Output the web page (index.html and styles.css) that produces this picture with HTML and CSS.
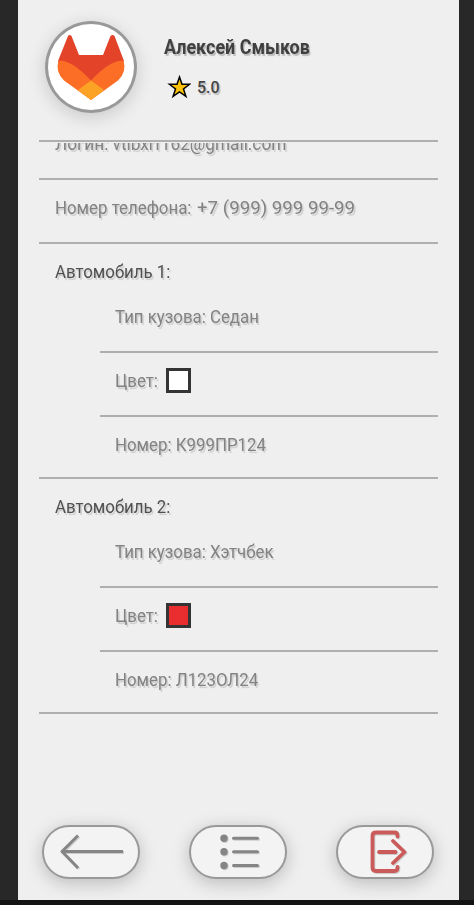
FILE: index.html
```html
<!DOCTYPE html>
<html lang="ru">
<head>
<meta charset="utf-8">
<title>Профиль</title>
<link rel="stylesheet" href="styles.css">
</head>
<body>
<main class="screen">
  <header class="profile">
    <div class="avatar">
      <svg width="92" height="92" viewBox="0 0 92 92">
        <path fill="#e24329" d="M13 40 23 15Q24.500 12.800 26.500 15L34 34H58L65.500 15Q67.500 12.800 69.500 15L79 40 71 56 46 60 20 55Z"/>
        <path fill="#fc6d26" d="M13.500 39.500Q27 39 46 59.500Q65 39 78.500 39.500Q82 51 73 59.500L46 79 19 59.500Q10 51 13.500 39.500Z"/>
        <path fill="#fca326" d="M46 59.500 59 69 47.500 78Q46 79 44.500 78L33 69Z"/>
      </svg>
    </div>
    <div class="identity">
      <h1 class="name">Алексей Смыков</h1>
      <div class="rating">
        <svg width="24" height="24" viewBox="0 0 24 24"><path d="M12.500 2 15 9.300H22.500L16.500 13.900 18.900 21.300 12.500 16.900 6.100 21.300 8.500 13.900 2.500 9.300H10Z" fill="#fcc208" stroke="#000" stroke-width="1.500"/></svg>
        <span class="score">5.0</span>
      </div>
    </div>
  </header>
  <section class="details">
    <div class="row login"><span class="text email">Логин: vtlbxrf162@gmail.com</span></div>
    <div class="row"><span class="text phone-label">Номер телефона:</span><span class="text phone">+7 (999) 999 99-99</span></div>
    <div class="car">
      <h2 class="car-title">Автомобиль 1:</h2>
      <div class="car-info">
        <div class="row"><span class="text">Тип кузова: Седан</span></div>
        <div class="row"><span class="text color">Цвет:</span><i class="swatch white"></i></div>
        <div class="row plate"><span class="text">Номер: К999ПР124</span></div>
      </div>
    </div>
    <div class="car">
      <h2 class="car-title">Автомобиль 2:</h2>
      <div class="car-info">
        <div class="row"><span class="text">Тип кузова: Хэтчбек</span></div>
        <div class="row"><span class="text color">Цвет:</span><i class="swatch red"></i></div>
        <div class="row plate"><span class="text">Номер: Л123ОЛ24</span></div>
      </div>
    </div>
  </section>
  <nav class="actions">
    <button class="action" aria-label="Назад"><svg class="icon" width="94" height="50" viewBox="0 0 94 50"><path d="M79 24.500H18.500M34 8.500 18 24.500 34 41"/></svg></button>
    <button class="action" aria-label="Список"><svg class="icon" width="94" height="50" viewBox="0 0 94 50"><path d="M42.500 11.300H66.500M42.500 24.800H66.500M42.500 38.500H66.500" stroke-linecap="round"/><g class="dots"><circle cx="33" cy="11.300" r="3.700"/><circle cx="33" cy="24.800" r="3.700"/><circle cx="33" cy="38.500" r="3.700"/></g></svg></button>
    <button class="action" aria-label="Выйти"><svg class="icon exit" width="94" height="50" viewBox="0 0 94 50"><path d="M59.500 9.500V9Q59.500 5.500 56.500 5.500H38Q34.500 5.500 34.500 9V40.500Q34.500 44 38 44H56.500Q59.500 44 59.500 40.500V40M41 25H57.500M55 14 66.500 25 55 36"/></svg></button>
  </nav>
</main>
</body>
</html>
```
FILE: styles.css
```css
* { box-sizing: border-box; }
body {
  margin: 0;
  height: 905px;
  padding: 0 15px 5px 18px;
  background: linear-gradient(#282828 900px, #131314 900px);
  font-family: Roboto, "Liberation Sans", sans-serif;
  overflow: hidden;
}
.screen {
  height: 900px;
  background: #efefef;
  display: flex;
  flex-direction: column;
}
.profile {
  display: flex;
  height: 142px;
  margin: 0 21px;
  padding: 21px 0 0 6px;
  border-bottom: 2px solid #afafaf;
}
.avatar {
  width: 92px;
  height: 92px;
  border-radius: 50%;
  background: #fff;
  box-shadow: inset 0 0 0 3px #999, 0 4px 18px rgba(0, 0, 0, .16);
}
.avatar svg { display: block; }
.identity { margin-left: 27px; }
.name {
  margin: 12px 0 0;
  font-size: 19.500px;
  line-height: 29px;
  font-weight: 700;
  color: #404040;
  text-shadow: 1.500px 1.500px 1px #bbb;
  white-space: nowrap;
  transform: scaleX(.92);
  transform-origin: left;
}
.rating { display: flex; align-items: center; margin: 13px 0 0 3px; height: 24px; }
.score { margin-left: 6px; font-size: 16px; font-weight: 500; color: #444; text-shadow: 1.500px 1.500px 1px #bbb; }
.details { margin: 1px 21px 0; overflow: hidden; }
.row {
  height: 64px;
  padding: 0 0 6px 16px;
  display: flex;
  align-items: center;
  border-bottom: 2px solid #afafaf;
}
.login { margin-top: -27px; }
.text, .car-title {
  font-size: 18px;
  line-height: 56px;
  font-weight: 400;
  color: #828282;
  text-shadow: 1.500px 1.500px 1px #ccc;
  white-space: nowrap;
  transform: scaleX(.935);
  transform-origin: left;
}
.email { transform: scaleX(.957); }
.phone-label { width: 142px; }
.phone { transform: scaleX(1.038); }
.color { width: 43px; }
.car { border-bottom: 2px solid #afafaf; height: 235px; }
.car-title {
  margin: 0 0 0 16px;
  height: 45px;
  color: #505050;
}
.car-info { padding-left: 61px; }
.car-info .row { padding-left: 15px; }
.car-info .plate { border-bottom: 0; height: 62px; padding-bottom: 6px; }
.swatch { width: 25px; height: 25px; margin: -2px 0 0 8px; border: 3px solid #343434; }
.white { background: #fff; }
.red { background: #ea2e30; }
.actions { display: flex; gap: 49px; margin: auto 0 21px 24px; }
.action {
  width: 98px;
  height: 54px;
  padding: 0;
  border: 2px solid #999;
  border-radius: 27px;
  background: #f3f3f3;
  box-shadow: 0 4px 18px rgba(0, 0, 0, .22);
}
.icon { display: block; fill: none; stroke: #858585; stroke-width: 3; stroke-linejoin: round; filter: drop-shadow(1.500px 1.500px .5px #ccc); }
.exit { stroke: #cb5b5b; stroke-width: 3.800; stroke-linecap: round; }
.dots { fill: #858585; stroke: none; }
```
